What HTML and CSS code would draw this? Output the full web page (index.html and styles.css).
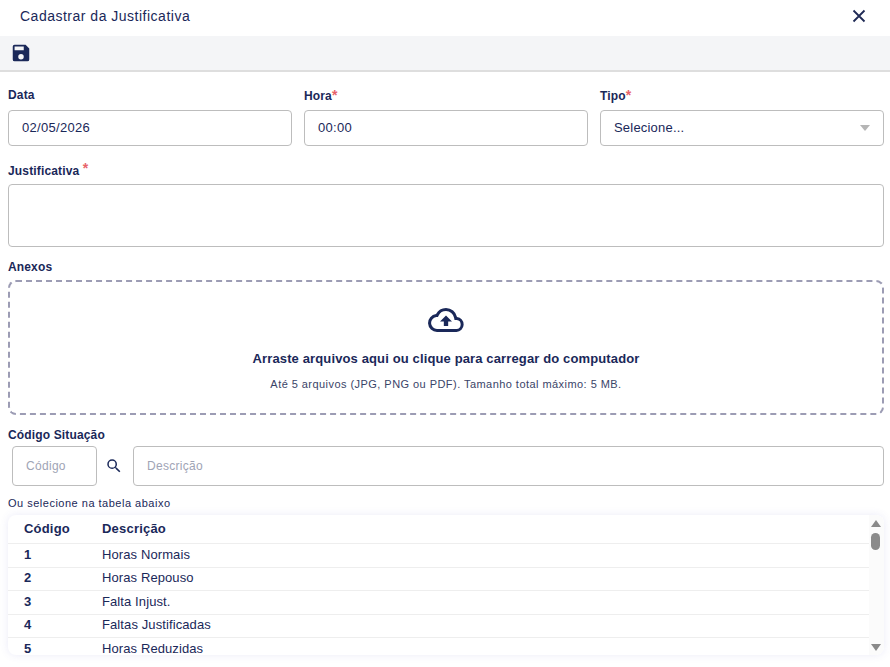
FILE: index.html
```html
<!DOCTYPE html>
<html lang="pt-BR">
<head>
    <meta charset="UTF-8">
    <title>Cadastrar da Justificativa</title>
    <link rel="stylesheet" href="styles.css">
</head>
<body>
<div class="modal">
    <header class="modal--title">
        <span>Cadastrar da Justificativa</span>
        <svg class="modal--close" viewBox="0 0 14 14" width="14" height="14"><path d="M1.5 1.5l11 11M12.5 1.5l-11 11" fill="none" stroke="#1f2a55" stroke-width="1.8"/></svg>
    </header>

    <div class="toolbar">
        <svg viewBox="0 0 24 24" width="22" height="22"><path fill="#1a2859" d="M17 3H5a2 2 0 0 0-2 2v14a2 2 0 0 0 2 2h14a2 2 0 0 0 2-2V7l-4-4zm-5 16a3 3 0 1 1 0-6 3 3 0 0 1 0 6zm3-10H5V5h10v4z"/></svg>
    </div>

    <form class="form">
        <div class="form--row">
            <div class="field">
                <label>Data</label>
                <div class="input">02/05/2026</div>
            </div>
            <div class="field">
                <label>Hora<span class="req">*</span></label>
                <div class="input">00:00</div>
            </div>
            <div class="field">
                <label>Tipo<span class="req">*</span></label>
                <div class="input input-select">Selecione...<i class="caret"></i></div>
            </div>
        </div>

        <div class="field field-just">
            <label>Justificativa <span class="req req-up">*</span></label>
            <div class="input textarea"></div>
        </div>

        <div class="field field-anexos">
            <label>Anexos</label>
            <div class="drop">
                <svg viewBox="0 0 24 24" width="36" height="36"><path fill="#1a2859" d="M19.35 10.04A7.49 7.49 0 0 0 12 4a7.5 7.5 0 0 0-6.65 4.04A6 6 0 0 0 6 20h13a5 5 0 0 0 .35-9.96zM19 18H6a4 4 0 0 1-.44-7.97l1.07-.11.5-.95A5.46 5.46 0 0 1 12 6a5.5 5.5 0 0 1 5.39 4.43l.3 1.5 1.53.11A3 3 0 0 1 19 18z"/><path fill="#1a2859" d="M8 13h2.55v3h2.9v-3H16l-4-4z"/></svg>
                <strong>Arraste arquivos aqui ou clique para carregar do computador</strong>
                <small>Até 5 arquivos (JPG, PNG ou PDF). Tamanho total máximo: 5 MB.</small>
            </div>
        </div>

        <div class="field field-cod">
            <label>Código Situação</label>
            <div class="search">
                <div class="input input-cod ph">Código</div>
                <svg viewBox="0 0 24 24" width="18" height="18"><path fill="#1a2859" d="M15.5 14h-.79l-.28-.27A6.47 6.47 0 0 0 16 9.5 6.5 6.5 0 1 0 9.5 16c1.61 0 3.09-.59 4.23-1.57l.27.28v.79l5 4.99L20.49 19l-4.99-5zm-6 0a4.5 4.5 0 1 1 0-9 4.5 4.5 0 0 1 0 9z"/></svg>
                <div class="input input-desc ph">Descrição</div>
            </div>
        </div>

        <p class="hint">Ou selecione na tabela abaixo</p>

        <div class="grid">
            <div class="grid--body">
                <div class="grid--row grid--head"><b>Código</b><b>Descrição</b></div>
                <div class="grid--row"><b>1</b><span>Horas Normais</span></div>
                <div class="grid--row"><b>2</b><span>Horas Repouso</span></div>
                <div class="grid--row"><b>3</b><span>Falta Injust.</span></div>
                <div class="grid--row"><b>4</b><span>Faltas Justificadas</span></div>
                <div class="grid--row"><b>5</b><span>Horas Reduzidas</span></div>
            </div>
            <div class="scroll">
                <i class="scroll--up"></i>
                <i class="scroll--thumb"></i>
                <i class="scroll--down"></i>
            </div>
        </div>
    </form>
</div>
</body>
</html>
```

FILE: styles.css
```css
*, *:before, *:after {
    box-sizing: border-box;
    padding: 0;
    margin: 0;
}

body {
    background: #fff;
    color: #1a2859;
    font-family: "Liberation Sans", Arial, sans-serif;
    font-size: 14px;
    overflow: hidden;
}

.modal {
    width: 890px;
    height: 667px;
    overflow: hidden;
}

.modal--title {
    height: 36px;
    padding: 0 24px 4px 20px;
    display: flex;
    align-items: center;
    justify-content: space-between;
    font-size: 14px;
    letter-spacing: 0.5px;
}

.toolbar {
    height: 36px;
    padding: 6px 10px 0;
    background: #f4f5f7;
    border-bottom: 2px solid #dedede;
}

.toolbar svg {
    display: block;
}

.form {
    padding: 16px 6px 0 8px;
}

.form--row {
    display: grid;
    grid-template-columns: repeat(3, 1fr);
    gap: 12px;
}

.field label {
    display: block;
    height: 22px;
    font-size: 12px;
    font-weight: 700;
    line-height: 15px;
    letter-spacing: 0.15px;
}

.req {
    color: #e8636a;
    font-weight: 700;
    font-size: 14px;
}

.req-up {
    position: relative;
    top: -2px;
}

.input {
    height: 36px;
    padding: 0 13px 2px;
    display: flex;
    align-items: center;
    border: 1px solid #bdbdbd;
    border-radius: 4px;
    font-size: 13px;
    letter-spacing: 0.3px;
}

.input-select {
    justify-content: space-between;
    letter-spacing: 0.2px;
}

.caret {
    width: 0;
    height: 0;
    margin-top: 2px;
    border-left: 5px solid transparent;
    border-right: 5px solid transparent;
    border-top: 6px solid #b5b5b5;
}

.field-just {
    margin-top: 17px;
}

.field-just label {
    height: 21px;
}

.textarea {
    height: 63px;
}

.field-anexos {
    margin-top: 13px;
}

.field-anexos label {
    height: 20px;
}

.drop {
    height: 135px;
    padding-top: 20px;
    display: flex;
    flex-direction: column;
    align-items: center;
    border: 2px dashed #9c9cb4;
    border-radius: 8px;
}

.drop strong {
    margin-top: 13px;
    font-size: 13px;
    letter-spacing: 0.13px;
}

.drop small {
    margin-top: 12px;
    font-size: 11px;
    letter-spacing: 0.45px;
    color: #3a4468;
}

.field-cod {
    margin-top: 13px;
}

.field-cod label {
    height: 18px;
}

.search {
    display: flex;
    align-items: center;
    padding-left: 4px;
}

.search svg {
    margin: 0 10px 0 8px;
}

.input-cod {
    width: 85px;
    height: 40px;
}

.input-desc {
    flex-grow: 1;
    height: 40px;
}

.ph {
    padding-bottom: 0;
    color: #a0a4b5;
    font-size: 12px;
}

.hint {
    margin-top: 11px;
    height: 18px;
    font-size: 11px;
    line-height: 13px;
    letter-spacing: 0.5px;
}

.grid {
    height: 140px;
    display: flex;
    overflow: hidden;
    border-radius: 8px;
    box-shadow: 0 0 8px rgba(90, 90, 200, 0.12);
}

.grid--body {
    flex-grow: 1;
}

.grid--row {
    height: 23.5px;
    display: flex;
    align-items: center;
    padding: 0 0 2px 16px;
    border-bottom: 1px solid #eeeeee;
    font-size: 13px;
    letter-spacing: 0.1px;
}

.grid--row b {
    width: 78px;
}

.grid--head {
    height: 29px;
    font-size: 13px;
    letter-spacing: 0.2px;
}

.scroll {
    flex: 0 0 15px;
    position: relative;
    background: #fbfbfb;
}

.scroll--up, .scroll--down {
    position: absolute;
    left: 2px;
    width: 0;
    height: 0;
    border-left: 5px solid transparent;
    border-right: 5px solid transparent;
}

.scroll--up {
    top: 5px;
    border-bottom: 7px solid #8a8a8a;
}

.scroll--down {
    bottom: 4px;
    border-top: 7px solid #8a8a8a;
}

.scroll--thumb {
    position: absolute;
    top: 18px;
    left: 2px;
    width: 9px;
    height: 17px;
    border-radius: 5px;
    background: #8a8a8a;
}
```
